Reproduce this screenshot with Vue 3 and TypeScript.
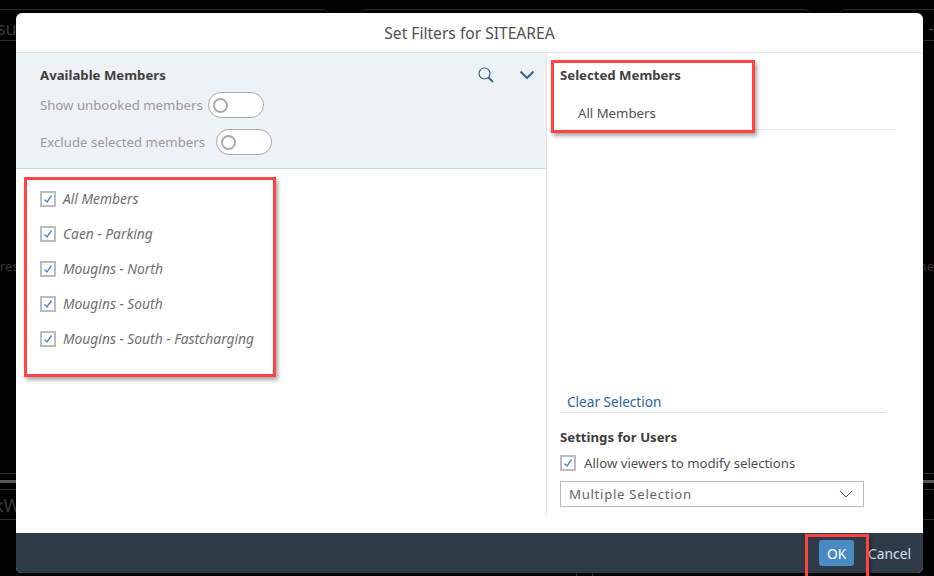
<script setup lang="ts">
const members: string[] = [
  'All Members',
  'Caen - Parking',
  'Mougins - North',
  'Mougins - South',
  'Mougins - South - Fastcharging',
];

const toggles = [
  { label: 'Show unbooked members', cls: 'toggle_row-show' },
  { label: 'Exclude selected members', cls: 'toggle_row-exclude' },
];

const tiles: string[] = ['tile-a', 'tile-b', 'tile-c'];
</script>

<template>
  <div class="page">
    <!-- dim dashboard behind the dialog -->
    <div class="backdrop">
      <div class="tiles">
        <div v-for="t in tiles" :key="t" class="tile" :class="t"></div>
      </div>
      <div class="bg-row top-row">
        <span class="bg-text big cut">sur</span>
        <span class="bg-dash">-</span>
      </div>
      <div class="bg-line line-top"></div>
      <div class="bg-row mid-row">
        <span class="bg-text cut-small">res</span>
        <span class="bg-text">me</span>
      </div>
      <div class="bg-line line-low"></div>
      <div class="bg-bar"></div>
      <div class="bg-line line-under"></div>
      <div class="bg-row kw-row">
        <span class="bg-text big cut-kw">kW</span>
      </div>
      <div class="bg-line line-last"></div>
      <div class="ticks"><i></i><i></i></div>
    </div>

    <div class="dialog">
      <header class="dialog_title">Set Filters for SITEAREA</header>

      <div class="dialog_body">
        <section class="left">
          <div class="left_header">
            <div class="left_title">
              <span class="text-key">Available Members</span>
              <div class="left_icons">
                <svg width="18" height="18" viewBox="0 0 18 18" fill="none" stroke="#2f6497">
                  <circle cx="7.5" cy="7.5" r="5.5" stroke-width="1.2" />
                  <path d="M11.5 11.5l4.5 4.5" stroke-width="1.8" />
                </svg>
                <svg width="16" height="10" viewBox="0 0 16 10" fill="none" stroke="#2f6497" stroke-width="2">
                  <path d="M1.5 1.5L8 8l6.500-6.500" />
                </svg>
              </div>
            </div>
            <div v-for="t in toggles" :key="t.label" class="toggle_row" :class="t.cls">
              <span>{{ t.label }}</span>
              <span class="toggle"><i></i></span>
            </div>
          </div>

          <ul class="member_list">
            <li v-for="m in members" :key="m" class="member">
              <span class="check">
                <svg width="10" height="10" viewBox="0 0 10 10" fill="none" stroke="#4a8ac4" stroke-width="1.4">
                  <path d="M1.500 5.500L4 8l4.500-6.500" />
                </svg>
              </span>
              <em>{{ m }}</em>
            </li>
          </ul>
        </section>

        <section class="right">
          <div class="text-key selected_title">Selected Members</div>
          <div class="selected_item">All Members</div>

          <div class="right_bottom">
            <a class="clear">Clear Selection</a>
            <div class="text-key settings_title">Settings for Users</div>
            <label class="allow">
              <span class="check">
                <svg width="10" height="10" viewBox="0 0 10 10" fill="none" stroke="#4a8ac4" stroke-width="1.4">
                  <path d="M1.500 5.500L4 8l4.500-6.500" />
                </svg>
              </span>
              <span>Allow viewers to modify selections</span>
            </label>
            <div class="select">
              <span>Multiple Selection</span>
              <svg width="14" height="8" viewBox="0 0 14 8" fill="none" stroke="#2f6497" stroke-width="1">
                <path d="M1 1l6 6 6-6" />
              </svg>
            </div>
          </div>
        </section>
      </div>

      <footer class="dialog_footer">
        <button class="ok">OK</button>
        <button class="cancel">Cancel</button>
      </footer>
    </div>

    <!-- red annotation boxes drawn on top of the screenshot -->
    <div class="mark mark-selected"></div>
    <div class="mark mark-list"></div>
    <div class="mark mark-ok"></div>
  </div>
</template>

<style>
html,
body {
  margin: 0;
  background: #000;
}
</style>

<style scoped>
.page {
  position: relative;
  display: grid;
  width: 934px;
  height: 576px;
  overflow: hidden;
  background: #000;
  font-family: "Noto Sans", "Open Sans", sans-serif;
  font-size: 13.2px;
  color: #4f4f4f;
}

.backdrop,
.dialog {
  grid-area: 1 / 1;
}

.backdrop {
  display: flex;
  flex-direction: column;
  padding-top: 9px;
  height: 567px;
  overflow: hidden;
  color: #3a3a3a;
}

.tiles {
  display: flex;
  height: 8px;
  gap: 26px;
}

.tile {
  border-top: 1px solid #2a2a2a;
  border-radius: 10px 10px 0 0;
}

.tile-a {
  width: 330px;
  border-top-left-radius: 0;
}

.tile-b {
  width: 453px;
  margin-left: 3px;
}

.tile-c {
  flex: 1;
  border-top-right-radius: 0;
}

.bg-row {
  display: flex;
  justify-content: space-between;
  align-items: center;
}

.top-row {
  height: 23px;
}

.bg-text {
  font-size: 13px;
  white-space: nowrap;
}

.bg-text.big {
  font-size: 18px;
}

.cut {
  margin-left: -3px;
}

.cut-small {
  margin-left: 0;
}

.cut-kw {
  margin-left: -6px;
}

.bg-dash {
  margin-right: 1px;
  color: #666;
}

.bg-line {
  height: 1px;
  background: #2e2e2e;
}

.mid-row {
  margin-top: 216px;
  height: 18px;
}

.line-low {
  margin-top: 198px;
}

.bg-bar {
  margin-top: 6px;
  height: 4px;
  background: #5a5a5a;
}

.line-under {
  margin-top: 6px;
}

.kw-row {
  height: 30px;
}

.ticks {
  display: flex;
  gap: 15px;
  margin: 51px 0 0 576px;
}

.ticks i {
  width: 1px;
  height: 5px;
  background: #2e2e2e;
}

.dialog {
  display: flex;
  flex-direction: column;
  margin: 13px 11px 3px 16px;
  background: #fff;
  border-radius: 6px;
  overflow: hidden;
}

.dialog_title {
  height: 39px;
  line-height: 41px;
  text-align: center;
  font-size: 15.6px;
  color: #4f4f4f;
  border-bottom: 1px solid #e5e5e5;
}

.dialog_body {
  display: flex;
  flex: 1;
  min-height: 0;
}

.text-key {
  font-weight: 700;
  color: #404040;
}

.left {
  width: 531px;
  height: 463px;
  box-sizing: border-box;
  border-right: 1px solid #e5e5e5;
}

.left_header {
  height: 116px;
  box-sizing: border-box;
  padding: 12px 11px 0 24px;
  background: #edf2f7;
  border-bottom: 1px solid #c6d9ed;
}

.left_title {
  display: flex;
  justify-content: space-between;
  align-items: center;
  height: 20px;
  margin-bottom: 7px;
}

.left_icons {
  display: flex;
  align-items: center;
  gap: 24px;
}

.toggle_row {
  display: flex;
  align-items: center;
  height: 26px;
  margin-bottom: 11px;
  color: #9a9a9a;
}

.toggle_row-show {
  gap: 5px;
}

.toggle_row-exclude {
  gap: 11px;
}

.toggle {
  display: flex;
  align-items: center;
  width: 56px;
  height: 26px;
  box-sizing: border-box;
  padding-left: 4px;
  background: #fff;
  border: 1px solid #a9a9a9;
  border-radius: 13px;
}

.toggle i {
  width: 15px;
  height: 15px;
  box-sizing: border-box;
  border: 2px solid #a9a9a9;
  border-radius: 50%;
}

.member_list {
  list-style: none;
  margin: 0;
  padding: 12px 0 0 24px;
}

.member {
  display: flex;
  align-items: center;
  gap: 7px;
  height: 35px;
  color: #6f6f6f;
  font-size: 13.8px;
}

.check {
  display: flex;
  align-items: center;
  justify-content: center;
  width: 16px;
  height: 16px;
  box-sizing: border-box;
  border: 2px solid #bcbcbc;
  background: #fff;
}

.right {
  display: flex;
  flex-direction: column;
  flex: 1;
  padding-left: 13px;
}

.selected_title {
  margin-top: 12px;
  height: 20px;
  line-height: 20px;
}

.selected_item {
  margin: 9px 27px 0 2px;
  height: 36px;
  line-height: 38px;
  padding-left: 16px;
  box-sizing: border-box;
  border-bottom: 1px solid #e5e5e5;
}

.right_bottom {
  display: flex;
  flex-direction: column;
  margin-top: auto;
  margin-bottom: 26px;
}

.clear {
  width: 319px;
  height: 20px;
  line-height: 20px;
  padding-left: 7px;
  color: #2f6497;
  font-size: 13.6px;
  border-bottom: 1px solid #e5e5e5;
}

.settings_title {
  margin-top: 14px;
  height: 20px;
  line-height: 20px;
}

.allow {
  display: flex;
  align-items: center;
  gap: 8px;
  margin-top: 8px;
  height: 16px;
}

.select {
  display: flex;
  align-items: center;
  justify-content: space-between;
  width: 304px;
  height: 26px;
  margin-top: 10px;
  box-sizing: border-box;
  padding: 0 10px 0 8px;
  border: 1px solid #bbb;
  letter-spacing: 0.7px;
  color: #666;
}

.dialog_footer {
  display: flex;
  align-items: center;
  justify-content: flex-end;
  gap: 14px;
  height: 40px;
  padding-right: 12px;
  background: #2f3c48;
}

.ok,
.cancel {
  font-family: inherit;
  font-size: 13.8px;
  border: 0;
  padding: 0;
}

.ok {
  width: 35px;
  height: 26px;
  background: #4a8ac4;
  color: #fff;
  border-radius: 3px;
}

.cancel {
  background: none;
  color: #cfe0ef;
}

.mark {
  position: absolute;
  box-sizing: border-box;
  border: 3px solid #ff4444;
  box-shadow: 2px 3px 4px rgba(0, 0, 0, 0.35);
}

.mark-selected {
  left: 551px;
  top: 60px;
  width: 204px;
  height: 73px;
}

.mark-list {
  left: 24px;
  top: 177px;
  width: 252px;
  height: 200px;
}

.mark-ok {
  left: 805px;
  top: 534px;
  width: 64px;
  height: 50px;
}
</style>
